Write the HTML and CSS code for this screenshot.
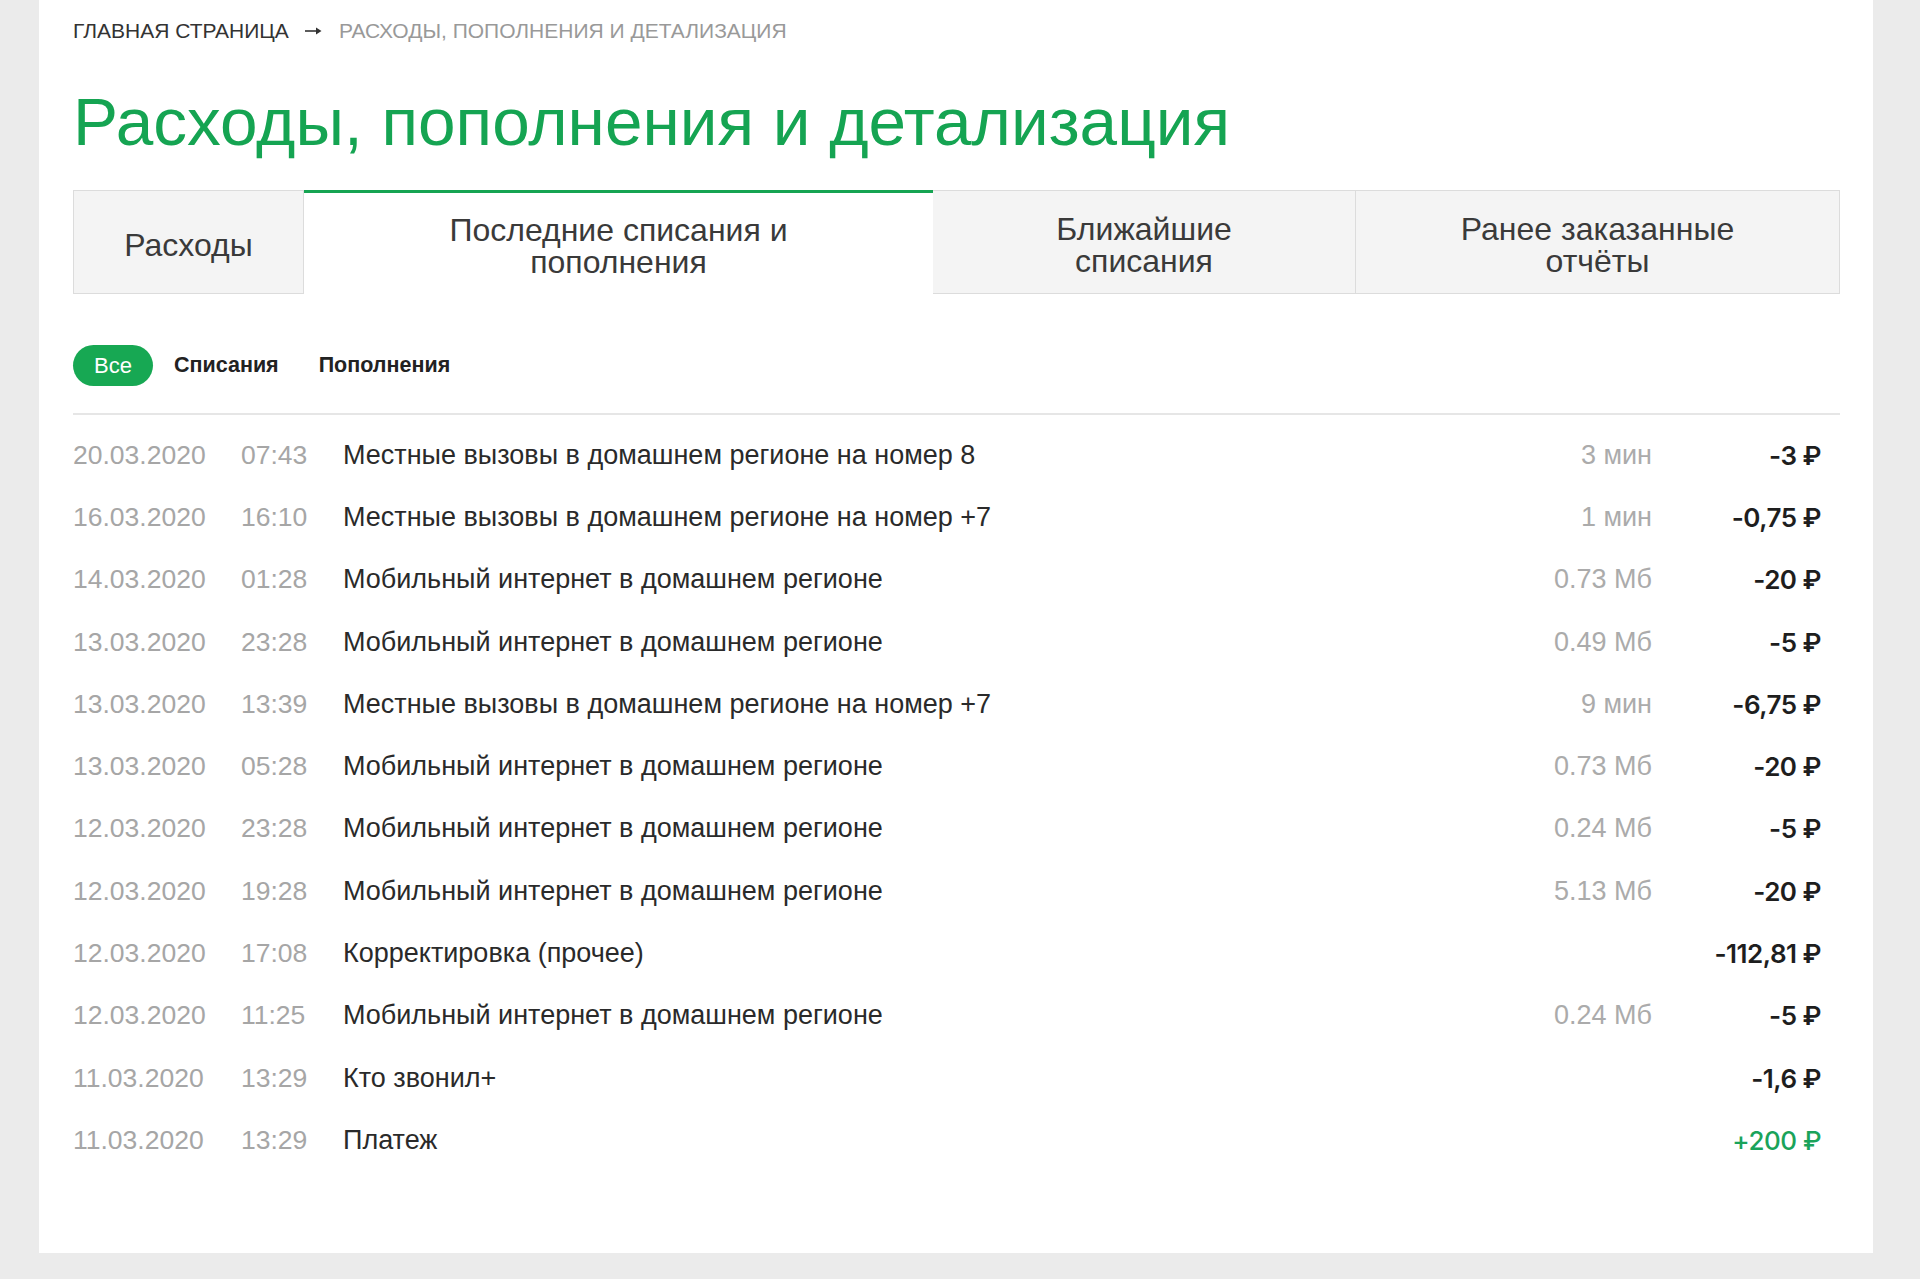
FILE: index.html
```html
<!DOCTYPE html>
<html lang="ru">
<head>
<meta charset="utf-8">
<title>Расходы, пополнения и детализация</title>
<link rel="stylesheet" href="styles.css">
</head>
<body>
<div class="card">
  <nav class="crumbs">
    <span class="crumb-home">ГЛАВНАЯ СТРАНИЦА</span>
    <svg class="crumb-arrow" width="18" height="10" viewBox="0 0 18 10" aria-hidden="true"><path d="M0 5H15" stroke="#333" stroke-width="1.6"/><path d="M11 1.5L16.5 5L11 8.5Z" fill="#333"/></svg>
    <span class="crumb-current">РАСХОДЫ, ПОПОЛНЕНИЯ И ДЕТАЛИЗАЦИЯ</span>
  </nav>
  <h1 class="title">Расходы, пополнения и детализация</h1>
  <div class="tabs">
    <div class="tab tab-1">Расходы</div>
    <div class="tab tab-2 active">Последние списания и<br>пополнения</div>
    <div class="tab tab-3">Ближайшие<br>списания</div>
    <div class="tab tab-4">Ранее заказанные<br>отчёты</div>
  </div>
  <div class="filters">
    <span class="pill active">Все</span>
    <span class="pill">Списания</span>
    <span class="pill">Пополнения</span>
  </div>
  <div class="list">
    <div class="row"><span class="date">20.03.2020</span><span class="time">07:43</span><span class="desc">Местные вызовы в домашнем регионе на номер 8</span><span class="vol">3 мин</span><span class="amt">-3 ₽</span></div>
    <div class="row"><span class="date">16.03.2020</span><span class="time">16:10</span><span class="desc">Местные вызовы в домашнем регионе на номер +7</span><span class="vol">1 мин</span><span class="amt">-0,75 ₽</span></div>
    <div class="row"><span class="date">14.03.2020</span><span class="time">01:28</span><span class="desc">Мобильный интернет в домашнем регионе</span><span class="vol">0.73 Мб</span><span class="amt">-20 ₽</span></div>
    <div class="row"><span class="date">13.03.2020</span><span class="time">23:28</span><span class="desc">Мобильный интернет в домашнем регионе</span><span class="vol">0.49 Мб</span><span class="amt">-5 ₽</span></div>
    <div class="row"><span class="date">13.03.2020</span><span class="time">13:39</span><span class="desc">Местные вызовы в домашнем регионе на номер +7</span><span class="vol">9 мин</span><span class="amt">-6,75 ₽</span></div>
    <div class="row"><span class="date">13.03.2020</span><span class="time">05:28</span><span class="desc">Мобильный интернет в домашнем регионе</span><span class="vol">0.73 Мб</span><span class="amt">-20 ₽</span></div>
    <div class="row"><span class="date">12.03.2020</span><span class="time">23:28</span><span class="desc">Мобильный интернет в домашнем регионе</span><span class="vol">0.24 Мб</span><span class="amt">-5 ₽</span></div>
    <div class="row"><span class="date">12.03.2020</span><span class="time">19:28</span><span class="desc">Мобильный интернет в домашнем регионе</span><span class="vol">5.13 Мб</span><span class="amt">-20 ₽</span></div>
    <div class="row"><span class="date">12.03.2020</span><span class="time">17:08</span><span class="desc">Корректировка (прочее)</span><span class="vol"></span><span class="amt">-112,81 ₽</span></div>
    <div class="row"><span class="date">12.03.2020</span><span class="time">11:25</span><span class="desc">Мобильный интернет в домашнем регионе</span><span class="vol">0.24 Мб</span><span class="amt">-5 ₽</span></div>
    <div class="row"><span class="date">11.03.2020</span><span class="time">13:29</span><span class="desc">Кто звонил+</span><span class="vol"></span><span class="amt">-1,6 ₽</span></div>
    <div class="row"><span class="date">11.03.2020</span><span class="time">13:29</span><span class="desc">Платеж</span><span class="vol"></span><span class="amt plus">+200 ₽</span></div>
  </div>
</div>
</body>
</html>
```

FILE: styles.css
```css
html, body {
  margin: 0;
  padding: 0;
}
body {
  background: #ebebeb;
  font-family: "Liberation Sans", Arial, sans-serif;
  color: #333;
}
.card {
  margin-left: 39px;
  width: 1834px;
  height: 1253px;
  box-sizing: border-box;
  background: #fff;
  padding: 0 33px 0 34px;
}
.crumbs {
  padding-top: 19px;
  height: 24px;
  font-size: 21px;
  line-height: 24px;
  display: flex;
  align-items: center;
  gap: 16px;
  white-space: nowrap;
}
.crumb-home { color: #333; }
.crumb-arrow { display: block; flex: none; }
.crumb-current { color: #999; }
.title {
  margin: 45px 0 0 0;
  font-size: 67.5px;
  line-height: 68px;
  font-weight: normal;
  color: #15a452;
  white-space: nowrap;
}
.tabs {
  margin-top: 34px;
  display: flex;
  height: 104px;
}
.tab {
  box-sizing: border-box;
  display: flex;
  align-items: center;
  justify-content: center;
  text-align: center;
  background: #f4f4f4;
  border: 1px solid #dcdcdc;
  border-left: none;
  font-size: 32px;
  line-height: 32px;
  color: #3a3a3a;
  padding-top: 6px;
}
.tab-1 { width: 231px; border-left: 1px solid #dcdcdc; }
.tab-2 { width: 629px; }
.tab-3 { width: 423px; }
.tab-4 { width: 484px; }
.tab.active {
  background: #fff;
  border: none;
  border-top: 3px solid #15a452;
  padding-top: 5px;
}
.filters {
  margin-top: 51px;
  display: flex;
  align-items: center;
  gap: 0;
  height: 41px;
  font-size: 21.5px;
  font-weight: bold;
  color: #222;
}
.pill {
  height: 41px;
  line-height: 41px;
  border-radius: 21px;
}
.pill.active {
  background: #17a853;
  color: #fff;
  width: 80px;
  text-align: center;
  margin-right: 21px;
  font-weight: normal;
  font-size: 22px;
}
.pill + .pill + .pill {
  margin-left: 40px;
}
.list {
  margin-top: 27px;
  border-top: 2px solid #e6e6e6;
  padding-top: 9px;
}
.row {
  display: flex;
  align-items: center;
  height: 62.3px;
  font-size: 26px;
}
.date {
  width: 168px;
  color: #a6a6a6;
  font-size: 26.5px;
}
.time {
  width: 102px;
  color: #a6a6a6;
  font-size: 26.5px;
}
.desc {
  flex: 1;
  color: #2a2a2a;
  font-size: 27px;
}
.vol {
  width: 200px;
  text-align: right;
  color: #ababab;
  font-size: 27px;
}
.amt {
  width: 169px;
  text-align: right;
  padding-right: 19px;
  font-family: Inter, "Liberation Sans", sans-serif;
  font-weight: 600;
  font-size: 26px;
  color: #1e1e1e;
  letter-spacing: -0.5px;
}
.amt.plus {
  color: #1aa35a;
  font-weight: 500;
}
```
